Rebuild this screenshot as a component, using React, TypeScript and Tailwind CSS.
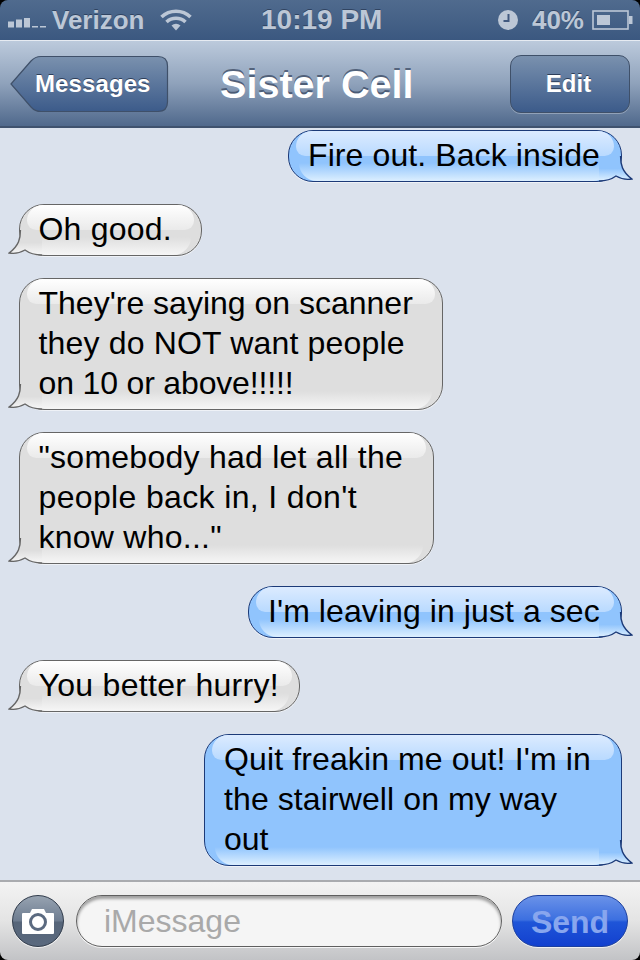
import React from "react";

const FONT = "font-['Liberation_Sans',Arial,sans-serif]";

function Tail({ side, blue }: { side: "left" | "right"; blue: boolean }) {
  const stroke = blue ? "#1c3a78" : "#666666";
  const id = `tail-${side}-${blue ? "b" : "g"}`;
  const top = blue ? "#90c4fd" : "#dedede";
  const bottom = blue ? "#dcefff" : "#f6f6f6";
  return (
    <svg
      width="38"
      height="38"
      viewBox="0 0 38 38"
      className={
        side === "right"
          ? "absolute right-[-12px] bottom-[-1px]"
          : "absolute left-[-12px] bottom-[-1px] -scale-x-100"
      }
    >
      <defs>
        <linearGradient id={id} x1="0" y1="0" x2="0" y2="1">
          <stop offset="0.5" stopColor={top} />
          <stop offset="0.97" stopColor={bottom} />
        </linearGradient>
      </defs>
      <path
        d="M25.5 12 C25.5 20 27 28 37 35 C31 36 26 35 21 32 C17 35 12 37 4 37 L4 12 Z"
        fill={`url(#${id})`}
      />
      <path
        d="M25.5 12 C25.5 20 27 28 37 35 C31 36 26 35 21 32 C17 35 12 37 4 37"
        fill="none"
        stroke={stroke}
        strokeWidth="1.3"
      />
    </svg>
  );
}

type Line = { t: string; c: string };

function Bubble({
  side,
  width,
  lines,
}: {
  side: "left" | "right";
  width: string;
  lines: Line[];
}) {
  const blue = side === "right";
  return (
    <div
      className={
        "relative rounded-[25px] border shadow-[0_1px_0_rgba(255,255,255,0.55)] pt-[3.5px] pb-[6.5px] " +
        width +
        " " +
        (blue
          ? "self-end mr-[18px] pl-[19px] bg-[#90c4fd] border-[#1c3a78]"
          : "self-start ml-[19px] pl-[18.5px] bg-[#dedede] border-[#666666]")
      }
    >
      <div
        className={
          "absolute bottom-0 left-[10px] right-[10px] h-[18px] rounded-b-[24px] bg-gradient-to-b from-transparent " +
          (blue ? "to-[#dcefff]" : "to-[#f6f6f6]")
        }
      />
      <Tail side={side} blue={blue} />
      <div
        className={
          "absolute top-0 left-[7px] right-[7px] h-[25px] rounded-t-[24px] rounded-b-[14px] bg-gradient-to-b " +
          (blue ? "from-[#dcebff] to-[#b9daff]" : "from-[#ffffff] to-[#eaeaea]")
        }
      />
      <div className="relative text-[32px] leading-[40px] text-black whitespace-nowrap">
        {lines.map((l) => (
          <div key={l.t} className={l.c}>
            {l.t}
          </div>
        ))}
      </div>
    </div>
  );
}

function NavButton({ label }: { label: string }) {
  return (
    <div className="w-[120px] h-[58px] rounded-[11px] border border-[#3f5069] bg-gradient-to-b from-[#7a91ae] to-[#3c5b8a] shadow-[0_1px_0_rgba(255,255,255,0.3)] flex items-center justify-center pr-[3px] text-[24px] font-bold text-white [text-shadow:0_-1px_0_rgba(30,45,70,0.8)]">
      {label}
    </div>
  );
}

function BackButton() {
  return (
    <div className="relative w-[159px] h-[58px] flex items-center pl-[25px] text-[24px] tracking-[0.1px] font-bold text-white [text-shadow:0_-1px_0_rgba(30,45,70,0.8)]">
      <svg width="159" height="58" viewBox="0 0 159 58" className="absolute inset-0">
        <defs>
          <linearGradient id="backg" x1="0" y1="0" x2="0" y2="1">
            <stop offset="0" stopColor="#7a91ae" />
            <stop offset="1" stopColor="#3c5b8a" />
          </linearGradient>
        </defs>
        <path
          d="M1 29 L21 6 Q25 1.5 31 1.5 L148 1.5 Q157.5 1.5 157.5 11 L157.5 47 Q157.5 56.5 148 56.5 L31 56.5 Q25 56.5 21 52 Z"
          fill="url(#backg)"
          stroke="#3f5069"
          strokeWidth="1.2"
        />
      </svg>
      <span className="relative">Messages</span>
    </div>
  );
}

function Signal() {
  return (
    <svg width="44" height="12" viewBox="0 0 44 12" className="fill-[#bcc7d6] shrink-0 mt-[4px]">
      <rect x="0" y="5.5" width="6" height="6" />
      <rect x="8" y="3.5" width="6" height="8" />
      <rect x="16" y="2" width="6" height="9.5" />
      <rect x="24" y="10" width="6" height="1.5" />
      <rect x="32" y="10" width="6" height="1.5" />
    </svg>
  );
}

function Wifi() {
  return (
    <svg width="32" height="22" viewBox="0 0 32 22" fill="none" stroke="#bcc7d6" strokeWidth="3.6" className="shrink-0">
      <path d="M1.5 8 A21 21 0 0 1 30.5 8" />
      <path d="M6.5 13 A14 14 0 0 1 25.5 13" />
      <path d="M16 21.5 L11.5 16.5 A7 7 0 0 1 20.5 16.5 Z" fill="#bcc7d6" stroke="none" />
    </svg>
  );
}

function Clock() {
  return (
    <svg width="20" height="20" viewBox="0 0 20 20" className="shrink-0">
      <circle cx="10" cy="10" r="10" fill="#bcc7d6" />
      <path d="M10.5 4 V11 H5.5" fill="none" stroke="#41597f" strokeWidth="2" />
    </svg>
  );
}

function Battery() {
  return (
    <svg width="42" height="20" viewBox="0 0 42 20" className="shrink-0">
      <rect x="1" y="1" width="35" height="18" fill="none" stroke="#bcc7d6" strokeWidth="1.6" />
      <rect x="5" y="5" width="13" height="10" fill="#bcc7d6" />
      <rect x="37" y="6" width="3.5" height="8" fill="#bcc7d6" />
    </svg>
  );
}

function Camera() {
  return (
    <div className="w-[52px] h-[52px] shrink-0 rounded-full border border-[#2f3a4a] bg-[linear-gradient(to_bottom,#97a3b1_0%,#6d7c90_50%,#566579_52%,#5a697e_100%)] shadow-[0_1px_0_rgba(255,255,255,0.7)] flex items-center justify-center">
      <svg width="32" height="26" viewBox="0 0 32 26">
        <path d="M1 5 H8 L10 1 H22 L24 5 H31 Q32 5 32 6 V25 Q32 26 31 26 H1 Q0 26 0 25 V6 Q0 5 1 5 Z" fill="#ffffff" />
        <circle cx="16" cy="14" r="7.5" fill="none" stroke="#5b6a80" strokeWidth="3" />
      </svg>
    </div>
  );
}

const messages: { side: "left" | "right"; width: string; lines: Line[] }[] = [
  { side: "right", width: "w-[334px]", lines: [{ t: "Fire out. Back inside", c: "tracking-[0.1px]" }] },
  { side: "left", width: "w-[183px]", lines: [{ t: "Oh good.", c: "tracking-[0.2px]" }] },
  {
    side: "left",
    width: "w-[424px]",
    lines: [
      { t: "They're saying on scanner", c: "" },
      { t: "they do NOT want people", c: "tracking-[0.17px]" },
      { t: "on 10 or above!!!!!", c: "tracking-[-0.16px]" },
    ],
  },
  {
    side: "left",
    width: "w-[415px]",
    lines: [
      { t: '"somebody had let all the', c: "tracking-[0.25px]" },
      { t: "people back in, I don't", c: "tracking-[0.35px]" },
      { t: 'know who..."', c: "tracking-[0.25px]" },
    ],
  },
  { side: "right", width: "w-[374px]", lines: [{ t: "I'm leaving in just a sec", c: "tracking-[0.08px]" }] },
  { side: "left", width: "w-[281px]", lines: [{ t: "You better hurry!", c: "tracking-[0.3px]" }] },
  {
    side: "right",
    width: "w-[418px]",
    lines: [
      { t: "Quit freakin me out! I'm in", c: "tracking-[0.12px]" },
      { t: "the stairwell on my way", c: "tracking-[0.1px]" },
      { t: "out", c: "" },
    ],
  },
];

export default function App() {
  return (
    <div className={"w-[640px] h-[960px] bg-black flex flex-col overflow-hidden " + FONT}>
      <div className="h-[40px] shrink-0 rounded-t-[8px] bg-gradient-to-b from-[#506b8e] to-[#3b5880] flex items-center justify-between pl-[8px] pr-[6px] text-[#bcc7d6] font-bold text-[26px] [text-shadow:0_-1px_0_rgba(30,45,70,0.6)]">
        <div className="flex items-center w-[253px]">
          <Signal />
          <span>Verizon</span>
          <span className="ml-[16px] flex"><Wifi /></span>
        </div>
        <span className="text-[28px] mr-auto">10:19 PM</span>
        <div className="flex items-center gap-[14px]">
          <Clock />
          <div className="flex items-center gap-[8px]">
            <span>40%</span>
            <Battery />
          </div>
        </div>
      </div>
      <div className="h-[1px] shrink-0 bg-[#e6ebf2]" />
      <div className="h-[87px] shrink-0 border-b-2 border-[#3f526e] bg-gradient-to-b from-[#bccadc] via-[#8fa2bb] to-[#50698c] flex items-center pl-[10px] pr-[10px]">
        <BackButton />
        <div className="text-[39.6px] font-bold text-white ml-[51px] pt-[2px] [text-shadow:0_-2px_0_rgba(50,65,90,0.7)]">
          Sister Cell
        </div>
        <div className="ml-auto">
          <NavButton label="Edit" />
        </div>
      </div>
      <div className="flex-1 bg-[#dbe2ed] flex flex-col gap-[22px] pt-[2px] overflow-hidden">
        {messages.map((m) => (
          <Bubble key={m.lines[0].t} side={m.side} width={m.width} lines={m.lines} />
        ))}
      </div>
      <div className="h-[80px] shrink-0 rounded-b-[8px] border-t-2 border-[#a9abaf] bg-gradient-to-b from-[#f3f3f3] via-[#e4e4e4] to-[#c2c3c6] flex items-center pl-[12px] pr-[12px]">
        <Camera />
        <div className="ml-[12px] w-[426px] h-[52px] rounded-[26px] border border-[#5f5f5f] bg-[#f5f5f5] shadow-[inset_0_3px_3px_rgba(0,0,0,0.35),0_1px_0_rgba(255,255,255,0.8)] flex items-center pl-[27px] text-[32px] text-[#a9a9a9]">
          iMessage
        </div>
        <div className="ml-[10px] w-[116px] h-[52px] rounded-[26px] border border-[#1b3f9e] bg-[linear-gradient(to_bottom,#6a92e8_0%,#3c6fe0_48%,#1f55d8_52%,#1240cf_100%)] shadow-[0_1px_0_rgba(255,255,255,0.7)] flex items-center justify-center pt-[2px] text-[32px] font-bold text-[#88a6ee]">
          Send
        </div>
      </div>
    </div>
  );
}
